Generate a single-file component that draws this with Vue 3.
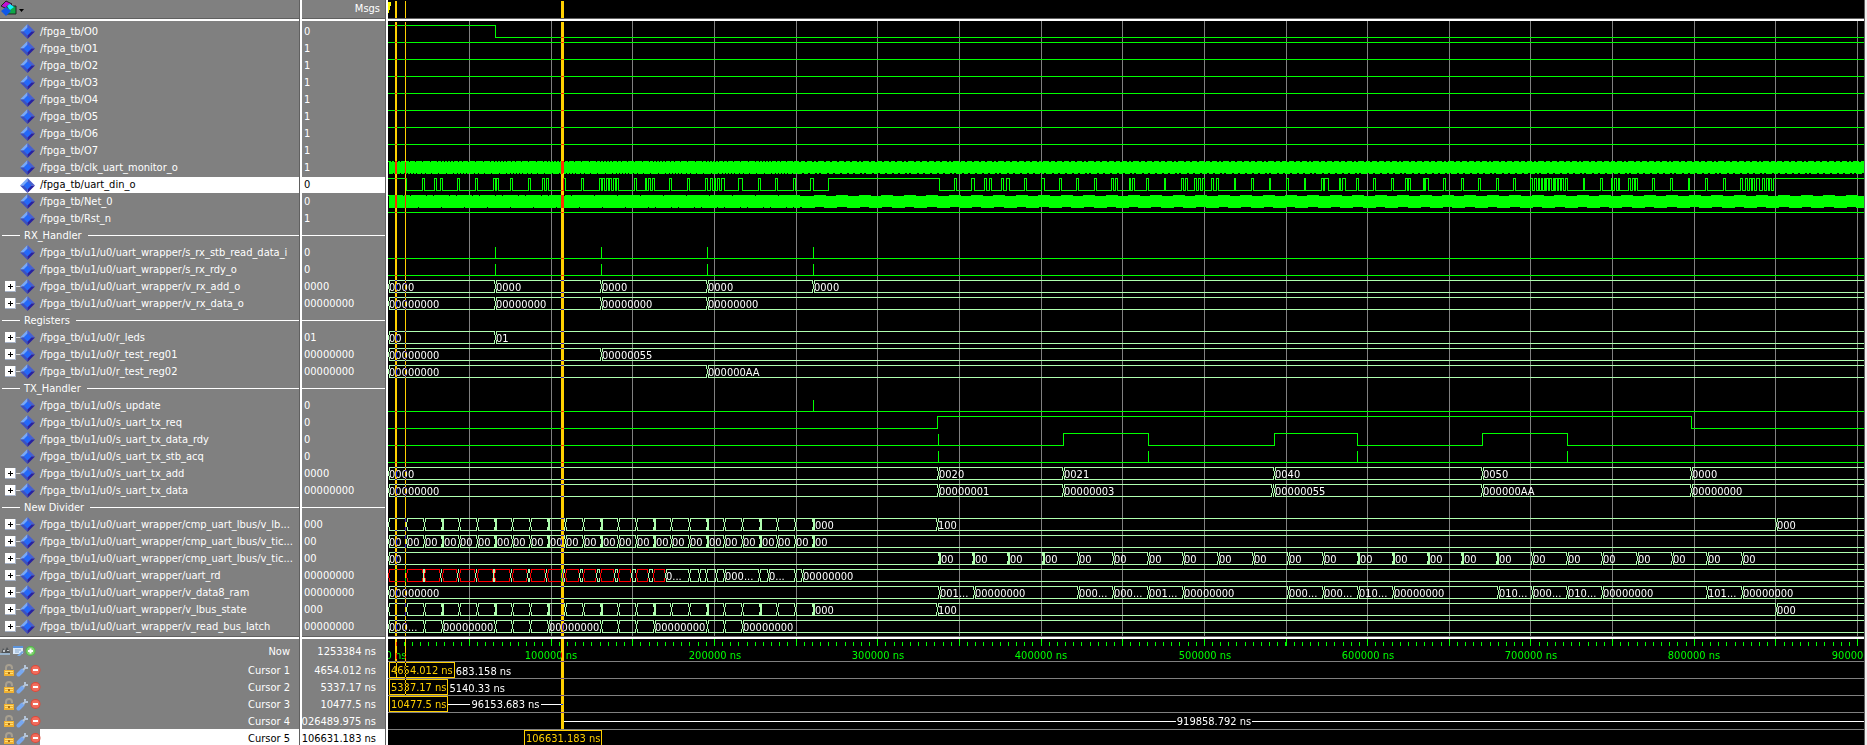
<script setup>
const N = '/fpga_tb/'
const U = '/fpga_tb/u1/u0/'
const W = '/fpga_tb/u1/u0/uart_wrapper/'

const range = (n, f) => Array.from({ length: n }, (_, k) => f(k))

/* Filled rectangle as path data */
const box = (x, y, w, h) => `M${x} ${y}h${w}v${h}h${-w}z`

/* Two-level signal: list of [x, level], first entry is the initial level */
function logic(points, spikes = []) {
  let d = ''
  points.forEach(([x, level], i) => {
    const next = i + 1 < points.length ? points[i + 1][0] : 6000
    if (i) d += box(x, 2, 1, 13)
    d += box(x, level ? 2 : 14, next - x, 1)
  })
  spikes.forEach((x) => (d += box(x, 3, 1, 11)))
  return d
}

/* Closing and opening halves of a value change on a bus */
const closing = (x, dense) => box(x - 1, 2, dense ? 2 : 1, 4) + box(x - 1, 11, dense ? 2 : 1, 4)
const opening = (x, dense) => box(x + 1, 2, 1, 4) + box(x + 1, 11, 1, 4) + box(x, 6, dense ? 2 : 1, 5)

/* Bus signal: list of [x, text, dense, undefinedValue] */
function bus(items) {
  let good = ''
  let bad = ''
  const labels = []
  items.forEach(([x, text, dense, undef], i) => {
    const next = items[i + 1]
    const end = next ? next[0] : 6000
    let d = opening(x, dense) + box(x + 1, 2, end - x - 1, 1) + box(x + 1, 14, end - x - 1, 1)
    if (next) d += closing(end, next[2])
    if (undef) bad += d
    else good += d
    if (text) labels.push({ x: x + (dense ? 2 : 1), text })
  })
  return { good, bad, labels }
}

/* Dense clock bands with the aliasing notches on both rims */
function clockBand() {
  let d = box(0, 2, 1, 1) + box(1, 3, 6000, 11)
  const offs = [0, 7, 11, 14, 17, 20, 23, 28, 32, 38, 45]
  const rim = (y, phase) => {
    let x = 1
    for (let c = -1; c < 8; c++) {
      offs.forEach((o) => {
        const n = phase + c * 53 + o
        if (n > x && n < 412) {
          d += box(x, y, n - x, 1)
          x = n + 1
        }
      })
    }
    const steps = [5, 4, 5, 2, 6, 4, 5]
    for (let k = 0; x < 3000; k++) {
      const w = steps[k % 7]
      d += box(x, y, w, 1)
      x += w + 2
    }
  }
  rim(2, 42)
  rim(14, 58)
  return d
}

function netBand() {
  let d = box(0, 2, 1, 1) + box(1, 3, 6000, 11)
  const rim = (y, notches) => {
    let x = 1
    notches.forEach((n) => {
      d += box(x, y, n - x, 1)
      x = n + 1
    })
    d += box(x, y, 412 - x, 1)
  }
  rim(2, [15, 22, ...range(7, (k) => [38 + k * 23, 45 + k * 23]).flat(), ...range(9, (k) => 206 + k * 23)])
  rim(14, [...range(10, (k) => 30 + k * 23), ...range(7, (k) => [260 + k * 23, 267 + k * 23]).flat().filter((v) => v < 412)])
  for (let k = 0; k < 110; k++) {
    d += box(Math.round(426 + k * 22.43), 2, 12, 1)
    d += box(Math.round(414 + k * 22.43), 14, 13, 1)
  }
  return d
}

/* Rise and fall positions of the serial line */
const serial = [
  [34, 36], [46, 48], [52, 54], [69, 71], [87, 89], [105, 107], [108, 110], [122, 124], [140, 142], [154, 156],
  [158, 160], [175, 177], [193, 195], [211, 213], [214, 216], [218, 220], [221, 223], [225, 227], [228, 230],
  [246, 248], [257, 258], [260, 262], [264, 266], [281, 283], [299, 301], [317, 319], [322, 324], [326, 327],
  [329, 331], [333, 336], [350, 354], [370, 372], [387, 389], [405, 407], [422, 425], [440, 551], [566, 568],
  [583, 586], [596, 598], [601, 603], [613, 615], [618, 621], [636, 638], [653, 656], [671, 673], [688, 690],
  [706, 708], [723, 725], [727, 729], [741, 742], [744, 746], [758, 760], [776, 777], [793, 795], [797, 799],
  [806, 808], [810, 812], [814, 816], [823, 825], [828, 830], [846, 847], [863, 865], [881, 882], [898, 900],
  [916, 917], [933, 935], [936, 940], [951, 952], [954, 957], [968, 970], [985, 987], [1003, 1005], [1017, 1019],
  [1020, 1022], [1035, 1036], [1037, 1040], [1055, 1057], [1073, 1075], [1090, 1092], [1108, 1110], [1125, 1127],
  [1142, 1144], [1146, 1148], [1150, 1151], [1153, 1154], [1156, 1157], [1158, 1160], [1161, 1163], [1165, 1166],
  [1167, 1169], [1170, 1172], [1173, 1175], [1177, 1179], [1195, 1196], [1212, 1214], [1223, 1224], [1226, 1228],
  [1230, 1231], [1240, 1242], [1244, 1246], [1247, 1249], [1264, 1266], [1282, 1284], [1300, 1301], [1317, 1319],
  [1335, 1337], [1352, 1354], [1357, 1359], [1361, 1363], [1364, 1366], [1368, 1371], [1374, 1376], [1378, 1380],
  [1381, 1383],
]
const serialPoints = [[0, 1], [18, 0], ...serial.flatMap(([a, b]) => [[a, 1], [b, 0]]), [1385, 1]]

const frames = (text) => range(25, (k) => [k ? Math.round(0.7 + 17.67 * k) : 0, k === 24 ? '' : text, k > 0 && k % 3 === 0])
const stateBus = () => {
  const f = frames('')
  f[24][1] = '000'
  return [...f, [549, '100'], [1388, '000']]
}
const tickBus = () => {
  const f = frames('00')
  f[24][1] = '00'
  return f
}
const txTicks = () => [
  [0, '00'],
  ...range(24, (k) => [Math.round(550.5 + 34.93 * k), '00', k < 4 || (k > 11 && k < 17)]),
]
const redFrames = [
  [18, 35], [36, 52], [54, 69], [71, 87], [89, 105], [106, 122], [124, 139],
  [142, 157], [159, 174], [177, 191], [195, 208], [212, 226], [230, 243], [248, 260],
]
const readBus = [
  [0, '', false, true],
  ...redFrames.flatMap(([a, b]) => [[a, '', false, true], [b, '']]),
  [265, '', false, true],
  [277, '0...'], [301, ''], [311, ''], [318, ''], [328, ''], [336, '000...'], [371, ''], [380, '0...'], [407, ''], [414, '00000000'],
]

const sig = (name, value, d, extra = {}) => ({ name, value, d, ...extra })
const vec = (name, value, items) => ({ name, value, expandable: true, bus: bus(items) })
const divider = (name) => ({ name, divider: true })
const high = logic([[0, 1]])

const rows = [
  sig(N + 'O0', '0', logic([[0, 1], [107, 0]])),
  ...range(7, (k) => sig(`${N}O${k + 1}`, '1', high)),
  sig(N + 'clk_uart_monitor_o', '1', clockBand()),
  sig(N + 'uart_din_o', '0', logic(serialPoints), { selected: true }),
  sig(N + 'Net_0', '0', netBand()),
  sig(N + 'Rst_n', '1', high),
  divider('RX_Handler'),
  sig(W + 's_rx_stb_read_data_i', '0', logic([[0, 0]], [107, 213, 319, 425])),
  sig(W + 's_rx_rdy_o', '0', logic([[0, 0]], [107, 213, 319, 425])),
  vec(W + 'v_rx_add_o', '0000', [[0, '0000'], [107, '0000'], [213, '0000'], [319, '0000'], [425, '0000']]),
  vec(W + 'v_rx_data_o', '00000000', [[0, '00000000'], [107, '00000000'], [213, '00000000'], [319, '00000000']]),
  divider('Registers'),
  vec(U + 'r_leds', '01', [[0, '00'], [107, '01']]),
  vec(U + 'r_test_reg01', '00000000', [[0, '00000000'], [213, '00000055']]),
  vec(U + 'r_test_reg02', '00000000', [[0, '00000000'], [319, '000000AA']]),
  divider('TX_Handler'),
  sig(U + 's_update', '0', logic([[0, 0]], [425])),
  sig(U + 's_uart_tx_req', '0', logic([[0, 0], [549, 1], [1303, 0]])),
  sig(U + 's_uart_tx_data_rdy', '0', logic([[0, 0], [675, 1], [760, 0], [886, 1], [969, 0], [1094, 1], [1179, 0]], [550])),
  sig(U + 's_uart_tx_stb_acq', '0', logic([[0, 0]], [550, 760, 969, 1179])),
  vec(U + 's_uart_tx_add', '0000', [[0, '0000'], [550, '0020'], [675, '0021'], [886, '0040'], [1094, '0050'], [1303, '0000']]),
  vec(U + 's_uart_tx_data', '00000000', [
    [0, '00000000'], [550, '00000001'], [675, '00000003'], [884, ''], [886, '00000055'], [1094, '000000AA'], [1303, '00000000'],
  ]),
  divider('New Divider'),
  vec(W + 'cmp_uart_lbus/v_lb...', '000', stateBus()),
  vec(W + 'cmp_uart_lbus/v_tic...', '00', tickBus()),
  vec(W + 'cmp_uart_lbus/v_tic...', '00', txTicks()),
  vec(W + 'uart_rd', '00000000', readBus),
  vec(W + 'v_data8_ram', '00000000', [
    [0, '00000000'], [551, '001...'], [586, '00000000'], [690, '000...'], [725, '000...'], [760, '001...'], [795, '00000000'],
    [900, '000...'], [935, '000...'], [970, '010...'], [1005, '00000000'], [1110, '010...'], [1144, '000...'],
    [1179, '010...'], [1214, '00000000'], [1319, '101...'], [1354, '00000000'],
  ]),
  vec(W + 'v_lbus_state', '000', stateBus()),
  vec(W + 'v_read_bus_latch', '00000000', [
    [0, '000...'], [36, ''], [54, '00000000'], [107, ''], [124, ''], [142, ''], [160, '00000000'], [213, ''], [230, ''],
    [248, ''], [266, '00000000'], [319, ''], [336, ''], [354, '00000000'],
  ]),
]

const gridLines = range(36, (k) => Math.round(81 + k * 81.65))
const minorTicks = range(300, (k) => Math.floor(8 + k * 8.165))
const timeLabels = range(12, (k) => ({ x: k ? Math.round(k * 163.3) : 8, text: `${k * 100000} ns` }))

const cursors = [
  { name: 'Cursor 1', value: '4654.012 ns' },
  { name: 'Cursor 2', value: '5337.17 ns' },
  { name: 'Cursor 3', value: '10477.5 ns' },
  { name: 'Cursor 4', value: '1026489.975 ns' },
  { name: 'Cursor 5', value: '106631.183 ns', selected: true },
]
</script>

<template>
  <main class="viewer">
    <header class="pane name-head">
      <button class="menu" aria-label="Wave menu">
        <svg width="26" height="18" viewBox="0 0 26 18">
          <path d="M1 6 6 1l6 3-5 5z" fill="#c010d0" stroke="#222" stroke-width="1" />
          <path d="M7 6h9v8H7z" fill="#10a848" stroke="#222" stroke-width="1" />
          <path d="M7 6l3-2 4 3-4 3z" fill="#10f0ff" />
          <path d="M1 11 6 7l5 4-5 5z" fill="#1058e8" />
          <path d="M19 9h5l-2.5 3z" fill="#000" />
        </svg>
      </button>
    </header>
    <i class="vsplit"></i>
    <header class="pane msgs">Msgs</header>
    <i class="vsplit"></i>
    <div class="wave-head">
      <svg class="plot-head" shape-rendering="crispEdges">
        <path d="M0 2h3v4h-1v4h-1v3h-1z" fill="#ffff00" />
        <path d="M7 1h2v17h-2zM17 1h1v17h-1zM173 1h3v17h-3z" fill="#ffd000" />
      </svg>
    </div>
    <i class="vsplit edge"></i>

    <i class="hsplit"></i><i class="vsplit"></i><i class="hsplit"></i><i class="vsplit"></i><i class="hsplit"></i><i class="vsplit edge"></i>

    <section class="pane names">
      <div v-for="(r, i) in rows" :key="i" class="row" :class="{ selected: r.selected, divider: r.divider }">
        <template v-if="r.divider">
          <i class="lead"></i><span>{{ r.name }}</span><i class="rule"></i>
        </template>
        <template v-else>
          <span class="toggle-slot">
            <button v-if="r.expandable" class="toggle" :aria-label="'Expand ' + r.name">
              <svg width="17" height="11" shape-rendering="crispEdges">
                <path d="M0 0h11v11h-11z" fill="#a8b4c8" />
                <path d="M0 0h10v10h-10z" fill="#fff" />
                <path d="M3 5h5v1h-5zM5 3h1v5h-1z" fill="#000" />
                <path d="M11 5h6v1h-6z" fill="#d8d8d8" />
              </svg>
            </button>
          </span>
          <svg class="gem" width="15" height="15" viewBox="0 0 15 15">
            <path d="M7.5 0v7.5H0z" fill="#78a8f8" />
            <path d="M7.5 0v7.5H15z" fill="#4860d0" />
            <path d="M0 7.5h7.5V15z" fill="#3c50c0" />
            <path d="M15 7.5H7.5V15z" fill="#2820a0" />
            <path d="M7.5 3.5 11.5 7.5 7.5 11.5 3.5 7.5z" fill="#2468f8" />
          </svg>
          <span class="label">{{ r.name }}</span>
        </template>
      </div>
    </section>
    <i class="vsplit"></i>
    <section class="pane values">
      <div v-for="(r, i) in rows" :key="i" class="row value" :class="{ selected: r.selected, divider: r.divider }">
        <i v-if="r.divider" class="rule"></i>
        <span v-else>{{ r.value }}</span>
      </div>
    </section>
    <i class="vsplit"></i>
    <section class="waves">
      <svg class="overlay" shape-rendering="crispEdges">
        <rect v-for="x in gridLines" :key="x" :x="x" y="0" width="1" height="100%" fill="#808080" />
      </svg>
      <div v-for="(r, i) in rows" :key="i" class="wave-row">
        <svg v-if="!r.divider" class="plot">
          <path v-if="r.d" :d="r.d" fill="#00ff00" shape-rendering="crispEdges" />
          <template v-else>
            <path :d="r.bus.good" fill="#b0ffb0" shape-rendering="crispEdges" />
            <path :d="r.bus.bad" fill="#ff0000" shape-rendering="crispEdges" />
            <text v-for="l in r.bus.labels" :key="l.x" :x="l.x" y="13">{{ l.text }}</text>
          </template>
        </svg>
      </div>
      <svg class="overlay cursors" shape-rendering="crispEdges">
        <rect x="7" y="1" width="2" height="100%" />
        <rect x="17" y="1" width="1" height="100%" />
        <rect x="173" y="1" width="3" height="100%" />
      </svg>
    </section>
    <i class="vsplit edge"></i>

    <i class="hsplit"></i><i class="vsplit"></i><i class="hsplit"></i><i class="vsplit"></i><i class="hsplit"></i><i class="vsplit edge"></i>

    <section class="pane foot">
      <div class="foot-row now">
        <div class="tools">
          <button aria-label="Cursor settings">
            <svg width="11" height="12" viewBox="0 0 11 12">
              <path d="M1 9 3 3l2 3 2-4 3 5v3H1z" fill="#505458" />
              <path d="M0 8h10v2H0z" fill="#9ab4cc" />
              <path d="M3 5h2v2H3zM7 5h2v1H7z" fill="#c0c4c8" />
            </svg>
          </button>
          <button aria-label="Edit timeline">
            <svg width="12" height="12" viewBox="0 0 12 12">
              <path d="M1 1h10v8H1z" fill="#dceafa" />
              <path d="M1 1h10v2H1z" fill="#5c94dc" />
              <path d="M3 5h6M3 7h4" stroke="#88a8cc" />
              <path d="M5 11 10 6l2 1-4 4z" fill="#78a8e0" />
            </svg>
          </button>
          <button aria-label="Add cursor">
            <svg width="11" height="12" viewBox="0 0 11 12">
              <circle cx="5.5" cy="6" r="5" fill="#50b848" />
              <circle cx="5.5" cy="6" r="4" fill="#80d070" />
              <path d="M3 6h5M5.5 3.5v5" stroke="#fff" stroke-width="2" />
            </svg>
          </button>
        </div>
        <span class="foot-label">Now</span>
      </div>
      <div v-for="c in cursors" :key="c.name" class="foot-row" :class="{ selected: c.selected }">
        <div class="tools inset">
          <button :aria-label="'Lock ' + c.name">
            <svg width="12" height="13" viewBox="0 0 12 13">
              <path d="M3 7V4a3 3 0 0 1 6 0v1" fill="none" stroke="#a8a090" stroke-width="2" />
              <path d="M1 6h10v6H1z" fill="#f0b030" />
              <path d="M2 7h8v1H2zM2 9h8v1H2z" fill="#ffdc70" />
              <path d="M5 8h2v2H5z" fill="#a87018" />
            </svg>
          </button>
          <button :aria-label="'Edit ' + c.name">
            <svg width="13" height="13" viewBox="0 0 13 13">
              <path d="M2.5 10.500 6.500 6.500" stroke="#78a8f0" stroke-width="4" stroke-linecap="round" />
              <path d="M7 6 9 4M9 1v3h3" stroke="#b4c4d8" stroke-width="2" fill="none" />
            </svg>
          </button>
          <button :aria-label="'Delete ' + c.name">
            <svg width="11" height="13" viewBox="0 0 11 13">
              <circle cx="5.5" cy="6" r="5" fill="#e04838" />
              <circle cx="5.5" cy="6" r="4" fill="#f06c5c" />
              <path d="M3 6h5" stroke="#fff" stroke-width="2" />
            </svg>
          </button>
        </div>
        <span class="foot-label">{{ c.name }}</span>
      </div>
    </section>
    <i class="vsplit"></i>
    <section class="pane foot">
      <div class="foot-row now"><span class="foot-label">1253384 ns</span></div>
      <div v-for="c in cursors" :key="c.name" class="foot-row" :class="{ selected: c.selected }">
        <span class="foot-label">{{ c.value }}</span>
      </div>
    </section>
    <i class="vsplit"></i>
    <section class="timeline">
      <svg class="ruler">
        <g fill="#00ff00" shape-rendering="crispEdges">
          <rect v-for="x in minorTicks" :key="'m' + x" :x="x" y="3" width="1" height="4" />
          <rect v-for="x in gridLines" :key="'g' + x" :x="x" y="0" width="1" height="7" />
        </g>
        <text v-for="t in timeLabels" :key="t.x" class="time" :x="t.x" y="20" text-anchor="middle">{{ t.text }}</text>
      </svg>
      <div class="track"><span class="tag">4654.012 ns</span><span class="delta">683.158 ns</span></div>
      <div class="track"><span class="tag">5337.17 ns</span><span class="delta">5140.33 ns</span></div>
      <div class="track">
        <span class="tag">10477.5 ns</span>
        <div class="span short"><i></i><span class="delta">96153.683 ns</span><i></i></div>
      </div>
      <div class="track"><div class="span long"><i></i><span class="delta">919858.792 ns</span><i></i></div></div>
      <div class="track"><span class="tag current">106631.183 ns</span></div>
      <svg class="overlay cursors" shape-rendering="crispEdges">
        <rect x="7" y="0" width="2" height="22" />
        <rect x="8" y="22" width="1" height="16" />
        <rect x="17" y="0" width="1" height="56" />
        <rect x="173" y="0" width="3" height="90" />
      </svg>
    </section>
    <i class="vsplit edge"></i>
  </main>
</template>

<style>
body { margin: 0; background: #808080; }
</style>

<style scoped>
.viewer {
  display: grid;
  grid-template-columns: 299px 3px 83px 3px minmax(0, 1fr) 3px;
  grid-template-rows: 18px 3px auto 3px minmax(0, 1fr);
  height: 100vh;
  overflow: hidden;
  font-family: "DejaVu Sans Condensed", "Noto Sans", sans-serif;
  font-size: 11px;
  line-height: 17px;
  color: #fff;
  background: #808080;
}
button { padding: 0; border: 0; background: none; display: block; line-height: 0; }
svg { display: block; }
i { display: block; }
.pane { background: #808080; overflow: hidden; white-space: nowrap; }
.vsplit { border-left: 1px solid #606060; background: #fff; }
.edge { background: #f0f0f0; }
.hsplit { border-top: 1px solid #606060; background: #fff; }
.msgs { text-align: right; padding-right: 5px; line-height: 18px; }
.wave-head { background: #000; }
.plot-head { width: 100%; height: 18px; }

.names, .values { padding: 2px 0 1px; }
.row { display: flex; align-items: center; height: 17px; }
.row.selected { background: #fff; color: #000; background-clip: content-box; padding-top: 1px; height: 16px; line-height: 16px; }
.toggle-slot { width: 20px; flex: none; padding-left: 5px; box-sizing: border-box; }
.gem { flex: none; margin-right: 5px; }
.lead { width: 18px; height: 1px; background: #fff; margin: 0 4px 0 2px; }
.rule { flex: 1; height: 1px; background: #fff; }
.divider span + .rule { margin-left: 6px; }
.value { padding-left: 2px; }
.value.divider { padding-left: 0; }
.value.selected { padding-left: 0; text-indent: 2px; }

.waves, .timeline { position: relative; background: #000; overflow: hidden; isolation: isolate; min-width: 0; }
.waves { padding: 2px 0 1px; }
.overlay { position: absolute; left: 0; top: 0; width: 100%; height: 100%; }
.cursors { fill: #ffd000; mix-blend-mode: difference; }
.wave-row { position: relative; height: 17px; }
.plot { width: 100%; height: 17px; }
.plot text { fill: #fff; }

.foot-row { display: flex; align-items: center; height: 17px; }
.now { height: 22px; }
.tools { flex: none; display: flex; align-items: center; gap: 1px; width: 40px; height: 17px; padding-top: 2px; box-sizing: border-box; background: #808080; }
.tools.inset { padding-left: 3px; }
.foot-label { flex: 1; display: flex; justify-content: flex-end; padding: 2px 9px 0 0; min-width: 0; }
.foot-row.selected { background: #fff; color: #000; }

.ruler { width: 100%; height: 22px; }
.time { fill: #00ff00; }
.track { display: flex; height: 16px; border-top: 1px solid #808080; padding-left: 1px; white-space: nowrap; line-height: 20px; }
.tag { box-sizing: border-box; height: 16px; border: 1px solid #ffd000; color: #ffd000; padding: 0 1px; line-height: 16px; }
.tag.current { margin-left: 135px; }
.delta { padding: 2px 1px 0; }
.track > .delta { padding-top: 0; }
.span { display: flex; align-items: center; }
.span i { flex: 1; height: 1px; background: #fff; }
.short { width: 114px; }
.long { flex: 1; margin-left: 175px; }
</style>
